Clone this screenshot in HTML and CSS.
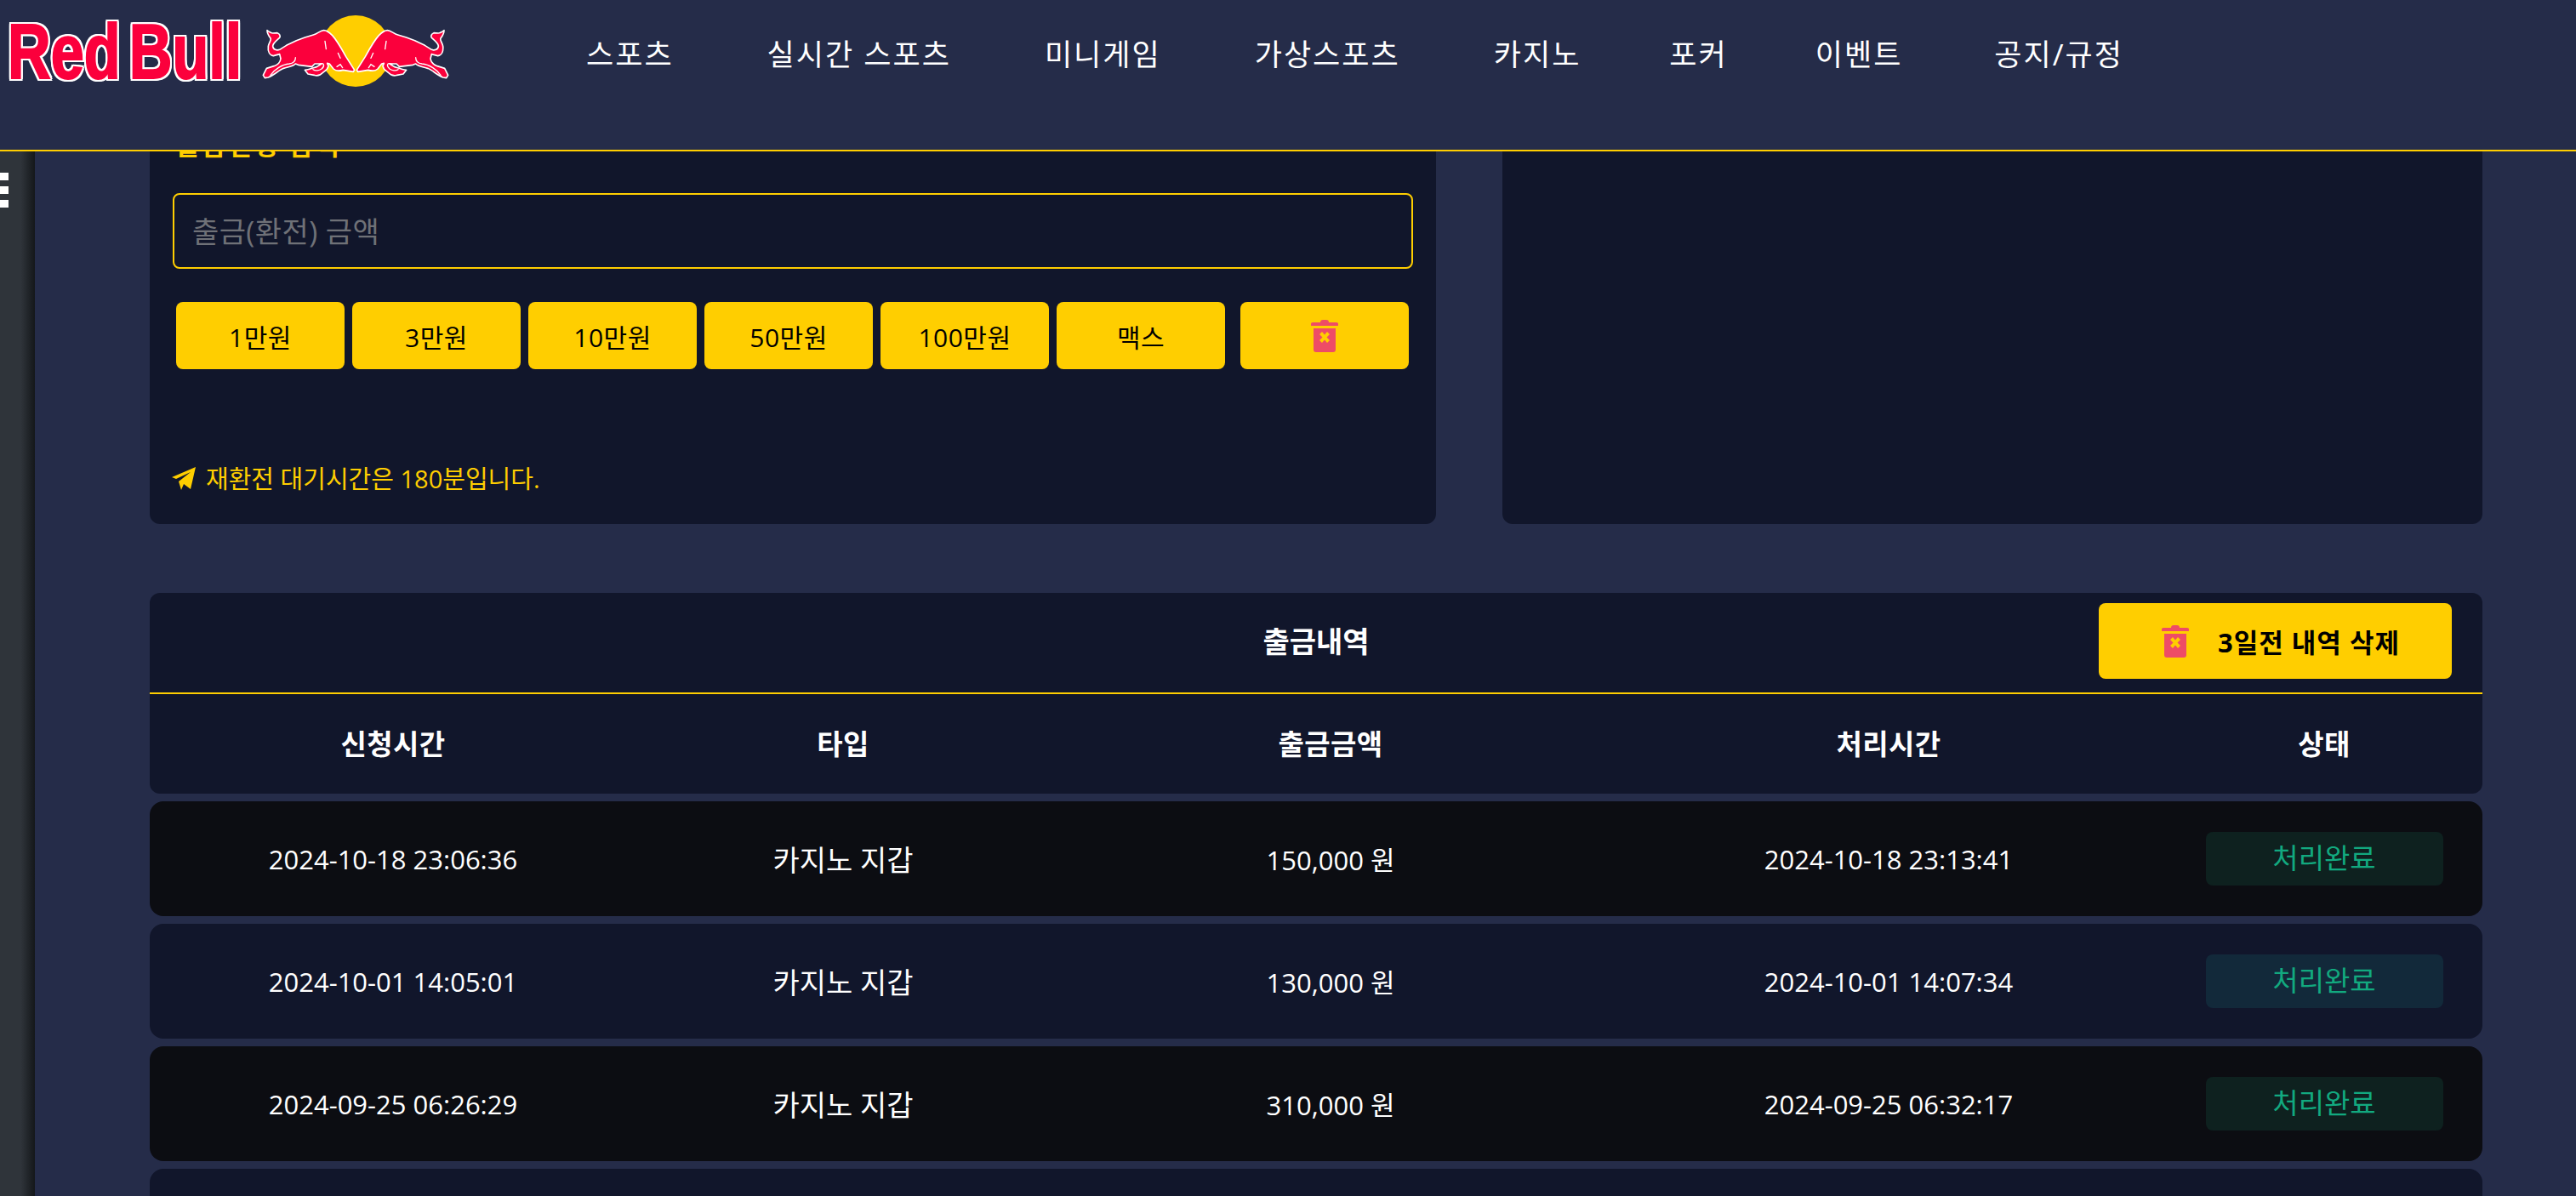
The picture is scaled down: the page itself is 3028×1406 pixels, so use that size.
FILE: index.html
```html
<!DOCTYPE html>
<html lang="ko">
<head>
<meta charset="utf-8">
<title>출금내역</title>
<link rel="stylesheet" href="styles.css">
</head>
<body>
<svg class="defs" width="0" height="0" aria-hidden="true">
  <defs>
    <symbol id="trash" viewBox="0 0 32 38">
      <path fill="#ee4c66" d="M11 3q0-3 3-3h4q3 0 3 3h9q2 0 2 1.500v2q0 .5-1 .5H1q-1 0-1-.5v-2Q0 3 2 3zM3 10h26v25q0 3-3 3H6q-3 0-3-3z"/>
      <path fill="#ffce00" d="M10 17l3-3 3 3.500 3-3.500 3 3-3.500 3.500 3.500 3.500-3 3-3-3.500-3 3.500-3-3 3.500-3.500z"/>
    </symbol>
    <path id="bull" d="M42 32C50 38 56 42 62 42L78 41C86 44 90 52 86 58 78 66 62 76 62 88 63 100 76 104 86 100L110 85 145 68 175 57 205 48C220 44 230 32 242 32 252 32 262 40 272 50 290 70 304 96 320 125L350 172 346 178 310 172C296 176 284 176 276 168L262 150 254 148 258 158C256 170 248 174 240 180 230 190 218 194 208 190L186 186 175 172C190 170 205 164 218 160L234 150 210 150 200 160 152 154 142 150C136 158 120 160 100 166 84 172 66 190 46 198L34 200 28 190 40 166 66 158C78 154 88 146 90 132L86 116 64 122C50 120 44 106 46 88 48 76 58 66 54 60 48 52 42 44 42 32z"/>
    <path id="bull-lines" d="M246 70L250 98M292 112L300 130M142 128C142 140 136 148 120 150 94 152 66 172 54 190M288 160L300 152 308 164M226 152C244 142 246 158 234 168 226 174 212 176 204 170"/>
  </defs>
</svg>
<header class="topbar">
  <a class="logo">
    <span class="wordmark"><span class="wordmark-text">Red Bull</span></span>
    <svg class="bulls" viewBox="0 -30 708 270" aria-hidden="true">
      <circle class="sun" cx="354" cy="105" r="126"/>
      <use class="bull" href="#bull"/>
      <use class="bull-line" href="#bull-lines"/>
      <g transform="translate(708 0) scale(-1 1)">
        <use class="bull" href="#bull"/>
        <use class="bull-line" href="#bull-lines"/>
      </g>
    </svg>
  </a>
  <nav class="nav">
    <a>스포츠</a><a>실시간 스포츠</a><a>미니게임</a><a>가상스포츠</a><a>카지노</a><a class="nudge-a">포커</a><a class="nudge-b">이벤트</a><a class="nudge-c">공지/규정</a>
  </nav>
</header>
<div class="layout">
  <aside class="rail"><span class="rail-bars"><i></i><i></i><i></i></span></aside>
  <main class="main">
    <section class="panels">
      <div class="panel form">
        <h3 class="form-title">출금신청 금액</h3>
        <input class="amount" type="text" placeholder="출금(환전) 금액">
        <div class="chips">
          <button class="chip">1만원</button>
          <button class="chip">3만원</button>
          <button class="chip">10만원</button>
          <button class="chip">50만원</button>
          <button class="chip">100만원</button>
          <button class="chip">맥스</button>
          <button class="chip clear"><svg class="trash"><use href="#trash"/></svg></button>
        </div>
        <p class="notice">
          <svg class="plane" viewBox="0 0 28 28" aria-hidden="true"><path d="M28 0L22 26 14 20 11 27 8 17 22 6 5 14 0 12z"/></svg>
          재환전 대기시간은 180분입니다.
        </p>
      </div>
      <div class="panel"></div>
    </section>
    <section class="history">
      <div class="history-head">
        <span></span>
        <h2 class="history-title">출금내역</h2>
        <div class="history-action">
          <button class="purge"><svg class="trash"><use href="#trash"/></svg><span>3일전 내역 삭제</span></button>
        </div>
      </div>
      <div class="row cols">
        <span>신청시간</span><span>타입</span><span>출금금액</span><span>처리시간</span><span>상태</span>
      </div>
      <div class="row data odd">
        <span>2024-10-18 23:06:36</span><span class="ko">카지노 지갑</span><span>150,000 원</span><span>2024-10-18 23:13:41</span><span class="badge">처리완료</span>
      </div>
      <div class="row data">
        <span>2024-10-01 14:05:01</span><span class="ko">카지노 지갑</span><span>130,000 원</span><span>2024-10-01 14:07:34</span><span class="badge">처리완료</span>
      </div>
      <div class="row data odd">
        <span>2024-09-25 06:26:29</span><span class="ko">카지노 지갑</span><span>310,000 원</span><span>2024-09-25 06:32:17</span><span class="badge">처리완료</span>
      </div>
      <div class="row data"></div>
    </section>
  </main>
</div>
</body>
</html>
```

FILE: styles.css
```css
* { box-sizing: border-box; }
html, body { margin: 0; height: 100%; overflow: hidden; }
body {
  background: #252c49;
  color: #fff;
  font-family: "Open Sans", "Noto Sans CJK KR", sans-serif;
  display: flex;
  flex-direction: column;
}
.defs { display: block; height: 0; }

.topbar {
  flex: none;
  height: 178px;
  background: #252c49;
  border-bottom: 2px solid #ffce00;
  display: flex;
  align-items: flex-start;
  position: relative;
  z-index: 2;
}
.logo { display: flex; align-items: flex-start; width: 689px; flex: none; padding-left: 9px; }
.wordmark {
  display: block;
  flex: none;
  margin-top: 15px;
  width: 291px;
  filter: drop-shadow(2px 0 0 #fff) drop-shadow(-2px 0 0 #fff) drop-shadow(0 2px 0 #fff) drop-shadow(0 -2px 0 #fff);
}
.wordmark-text {
  display: inline-block;
  transform: scaleX(.78);
  transform-origin: 0 50%;
  font-family: "Liberation Sans", sans-serif;
  font-weight: 700;
  font-size: 90px;
  line-height: 92px;
  letter-spacing: 0;
  word-spacing: -12px;
  white-space: nowrap;
  color: #fb003c;
  -webkit-text-stroke: 2px #fb003c;
}
.bulls { display: block; flex: none; width: 236px; height: 90px; margin-top: 15px; }
.sun { fill: #ffce00; }
.bull { fill: #fb003c; stroke: #fff; stroke-width: 5px; stroke-linejoin: round; }
.bull-line { fill: none; stroke: #fff; stroke-width: 4px; stroke-linecap: round; }

.nav { display: flex; gap: 110px; padding-top: 41px; }
.nav a { font-size: 35px; letter-spacing: 2px; line-height: 46px; white-space: nowrap; }
.nav .nudge-a { margin-left: -6px; }
.nav .nudge-b { margin-left: -7px; }
.nav .nudge-c { margin-left: -2px; }

.layout { flex: 1; min-height: 0; display: flex; overflow: hidden; }
.rail {
  flex: none;
  width: 41px;
  background: linear-gradient(90deg, #2f343a 0, #2f343a 60%, #14171a 100%);
  padding-top: 25px;
}
.rail-bars { display: flex; flex-direction: column; gap: 7px; width: 10px; }
.rail-bars i { display: block; height: 9px; background: #fff; }

.main { flex: none; width: 2742px; margin-left: 135px; }

.panels { display: grid; grid-template-columns: 1512px 1152px; gap: 78px; margin-top: -60px; }
.panel { height: 498px; background: #11162b; border-radius: 12px; }
.form { padding: 33px 28px 0; display: flex; flex-direction: column; }
.form-title { margin: 0; height: 76px; padding-left: 3px; color: #ffce00; font-size: 30px; letter-spacing: 3px; line-height: 40px; font-weight: 700; }
.amount {
  display: block;
  width: 1458px;
  height: 89px;
  margin-left: -1px;
  padding: 0 21px;
  background: transparent;
  border: 2px solid #ffce00;
  border-radius: 8px;
  color: #fff;
  font: 400 34px "Open Sans", "Noto Sans CJK KR", sans-serif;
  letter-spacing: .4px;
}
.amount::placeholder { color: #6f7177; opacity: 1; }
.chips { display: flex; gap: 9px; margin-top: 39px; padding-left: 3px; }
.chip {
  width: 198px;
  height: 79px;
  border: 0;
  border-radius: 8px;
  background: #ffce00;
  color: #000;
  font: 400 30px "Open Sans", "Noto Sans CJK KR", sans-serif;
  letter-spacing: .5px;
  display: flex;
  align-items: center;
  justify-content: center;
  padding: 0;
}
.chip.clear { margin-left: 9px; }
.trash { display: block; width: 32px; height: 38px; }
.notice {
  margin: 115px 0 0 -2px;
  display: flex;
  align-items: center;
  gap: 12px;
  color: #ffce00;
  font-size: 29px;
  line-height: 28px;
}
.plane { width: 28px; height: 28px; fill: #ffce00; flex: none; }

.history { margin-top: 81px; }
.history-head {
  height: 119px;
  background: #11162b;
  border-radius: 12px 12px 0 0;
  border-bottom: 2px solid #ffce00;
  display: grid;
  grid-template-columns: 1fr auto 1fr;
  align-items: start;
}
.history-title { margin: 0; font-size: 34px; line-height: 115px; height: 117px; font-weight: 700; }
.history-action { display: flex; justify-content: flex-end; padding: 12px 36px 0 0; }
.purge {
  width: 415px;
  height: 89px;
  border: 0;
  border-radius: 8px;
  background: #ffce00;
  color: #000;
  display: flex;
  align-items: center;
  gap: 34px;
  padding: 0 0 0 74px;
  font: 700 31px "Open Sans", "Noto Sans CJK KR", sans-serif;
  letter-spacing: 1px;
  white-space: nowrap;
}
.row {
  display: grid;
  grid-template-columns: 572px 486px 660px 652px 372px;
  align-items: center;
  justify-items: center;
  background: #11162b;
}
.cols { height: 117px; padding-bottom: 4px; border-radius: 0 0 12px 12px; font-size: 33px; letter-spacing: .4px; font-weight: 700; margin-bottom: 9px; }
.data { height: 135px; border-radius: 16px; font-size: 31px; margin-bottom: 9px; }
.data.odd { background: #0c0d12; }
.ko { font-size: 34px; }
.badge {
  width: 279px;
  height: 63px;
  border-radius: 8px;
  background: #12293a;
  color: #12a97f;
  font-size: 33px;
  line-height: 62px;
  text-align: center;
}
.odd .badge { background: #0e211f; }
```
